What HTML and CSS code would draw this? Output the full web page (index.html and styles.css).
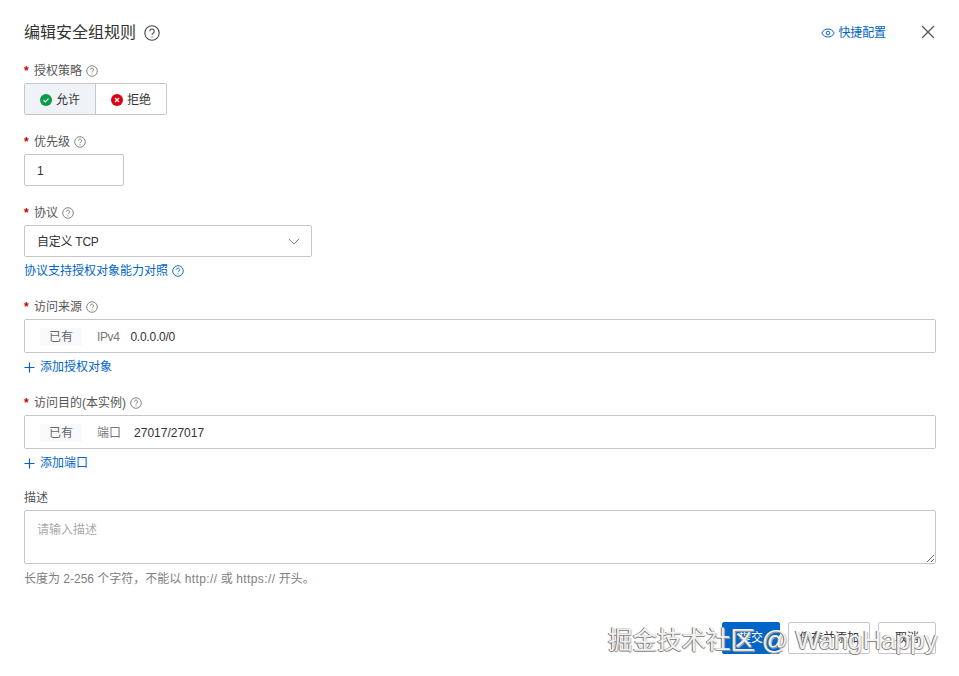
FILE: index.html
```html
<!DOCTYPE html>
<html lang="zh-CN">
<head>
<meta charset="utf-8">
<title>编辑安全组规则</title>
<link rel="stylesheet" href="styles.css">
</head>
<body>
<div class="dialog">
  <header class="head">
    <div class="title"><span>编辑安全组规则</span>
      <svg class="help-lg" viewBox="0 0 16 16"><circle cx="8" cy="8" r="7.2"/><path d="M5.8 6.2a2.2 2.2 0 1 1 3.4 1.9c-.8.5-1.2.9-1.2 1.8"/><path d="M8 11.4v1.2"/></svg>
    </div>
    <div class="head-right">
      <a class="link quick"><svg class="eye" viewBox="0 0 14 14"><path d="M.8 7C2.200 4.400 4.400 3 7 3s4.800 1.400 6.200 4C11.800 9.600 9.600 11 7 11S2.200 9.600.8 7z"/><circle cx="7" cy="7" r="1.800"/></svg>快捷配置</a>
      <svg class="close" viewBox="0 0 14 14"><path d="M1 1l12 12M13 1L1 13"/></svg>
    </div>
  </header>

  <div class="field f-policy">
    <label class="label"><i class="req">*</i>授权策略<svg class="help" viewBox="0 0 12 12"><use href="#q"/></svg></label>
    <div class="seg">
      <div class="seg-item on"><svg class="st" viewBox="0 0 12 12"><circle cx="6" cy="6" r="6" fill="#0a9d48"/><path d="M3.500 6.200l1.800 1.700 3.200-3.300" fill="none" stroke="#fff" stroke-width="1.200"/></svg>允许</div>
      <div class="seg-item"><svg class="st" viewBox="0 0 12 12"><circle cx="6" cy="6" r="6" fill="#de0012"/><path d="M4 4l4 4M8 4l-4 4" fill="none" stroke="#fff" stroke-width="1.200"/></svg>拒绝</div>
    </div>
  </div>

  <div class="field f-prio">
    <label class="label"><i class="req">*</i>优先级<svg class="help" viewBox="0 0 12 12"><use href="#q"/></svg></label>
    <div class="box prio">1</div>
  </div>

  <div class="field f-proto">
    <label class="label"><i class="req">*</i>协议<svg class="help" viewBox="0 0 12 12"><use href="#q"/></svg></label>
    <div class="box select"><span class="tight">自定义 TCP</span><svg class="chev" viewBox="0 0 12 7"><path d="M.8.800L6 6l5.200-5.200"/></svg></div>
    <a class="link compare">协议支持授权对象能力对照<svg class="help blue" viewBox="0 0 12 12"><use href="#q"/></svg></a>
  </div>

  <div class="field f-src">
    <label class="label"><i class="req">*</i>访问来源<svg class="help" viewBox="0 0 12 12"><use href="#q"/></svg></label>
    <div class="box entry"><span class="tag">已有</span><span class="kind k1">IPv4</span><span class="tight">0.0.0.0/0</span></div>
    <a class="link add"><svg class="plus" viewBox="0 0 11 11"><path d="M5.500.500v10M.5 5.500h10"/></svg>添加授权对象</a>
  </div>

  <div class="field f-dst">
    <label class="label"><i class="req">*</i>访问目的(本实例)<svg class="help" viewBox="0 0 12 12"><use href="#q"/></svg></label>
    <div class="box entry"><span class="tag">已有</span><span class="kind k2">端口</span><span>27017/27017</span></div>
    <a class="link add"><svg class="plus" viewBox="0 0 11 11"><path d="M5.500.500v10M.5 5.500h10"/></svg>添加端口</a>
  </div>

  <div class="field f-desc">
    <label class="label">描述</label>
    <textarea class="area" placeholder="请输入描述"></textarea>
    <p class="hint">长度为 2-256 个字符，不能以 <span class="wide-latin">http://</span> 或 <span class="wide-latin">https://</span> 开头。</p>
  </div>

  <footer class="foot">
    <button class="btn primary">提交</button>
    <button class="btn wide">保存并添加</button>
    <button class="btn">取消</button>
  </footer>
</div>
<div class="watermark">掘金技术社区 <span class="wm-latin">@ WangHappy</span></div>
<svg class="defs" width="0" height="0"><defs><g id="q" fill="none" stroke="currentColor" stroke-width=".9"><circle cx="6" cy="6" r="5.300"/><path d="M4.400 4.700a1.600 1.600 0 1 1 2.500 1.300c-.6.400-.9.700-.9 1.300"/><path d="M6 8.300v1"/></g></defs></svg>
</body>
</html>
```

FILE: styles.css
```css
* { box-sizing: border-box; }
html, body { margin: 0; height: 100%; }
body {
  background: #fff;
  color: #333;
  font: 12px/18px "Liberation Sans", "Noto Sans CJK SC", sans-serif;
  overflow: hidden;
  position: relative;
}
.dialog { padding: 22px 23px 0 24px; }
.head { display: flex; justify-content: space-between; align-items: center; height: 22px; }
.title { display: flex; align-items: center; gap: 8px; font-size: 16px; color: #333; }
.help-lg { width: 16px; height: 16px; fill: none; stroke: #444; stroke-width: 1.100; }
.head-right { display: flex; align-items: center; gap: 35px; padding-right: 1px; }
.link { color: #0064c8; display: flex; align-items: center; }
.quick { gap: 3px; letter-spacing: -.1px; }
.eye { width: 14px; height: 14px; fill: none; stroke: #0064c8; stroke-width: 1; }
.close { width: 14px; height: 14px; fill: none; stroke: #555; stroke-width: 1.300; margin-bottom: 2px; }
.field { display: flex; flex-direction: column; align-items: flex-start; }
.label { display: flex; align-items: center; height: 18px; color: #555; }
.req { font-style: normal; color: #c80000; width: 10px; font-weight: 700; }
.help { width: 12px; height: 12px; margin-left: 4px; color: #777; }
.help.blue { color: #0064c8; margin-left: 4px; }
.defs { position: absolute; }
.f-policy { margin-top: 18px; }
.f-prio { margin-top: 18px; }
.f-proto { margin-top: 18px; }
.f-src { margin-top: 18px; }
.f-dst { margin-top: 18px; }
.f-desc { margin-top: 17px; }
.seg { display: flex; margin-top: 3px; height: 32px; border: 1px solid #c4c6cc; border-radius: 2px; }
.seg-item { width: 71px; display: flex; align-items: center; justify-content: center; gap: 4px; color: #333; padding-top: 1px; }
.seg-item:last-child { width: 70px; }
.seg-item.on { background: #eff3f8; border-right: 1px solid #c4c6cc; }
.st { width: 12px; height: 12px; }
.box { border: 1px solid #c4c6cc; border-radius: 2px; display: flex; align-items: center; margin-top: 3px; color: #333; padding-top: 1px; }
.prio { width: 100px; height: 32px; padding-left: 12px; }
.select { width: 288px; height: 32px; padding: 1px 11px 0 12px; justify-content: space-between; }
.tight { letter-spacing: -.25px; }
.chev { width: 12px; height: 7px; fill: none; stroke: #888; stroke-width: 1; }
.compare { margin-top: 5px; }
.entry { width: 100%; height: 34px; padding-left: 15px; }
.tag { background: #f7f9fa; color: #666; padding: 0 9px; height: 18px; display: flex; align-items: center; border-radius: 2px; }
.kind { color: #777; }
.k1 { margin: 0 11px 0 15px; letter-spacing: -.4px; }
.k2 { margin: 0 13px 0 15px; }
.add { margin-top: 5px; gap: 5px; }
.plus { width: 11px; height: 11px; fill: none; stroke: #0064c8; stroke-width: 1.200; }
.area {
  display: block; width: 100%; height: 54px; margin: 3px 0 0;
  border: 1px solid #c4c6cc; border-radius: 2px; padding: 10px 12px;
  font: inherit; color: #333; background: #fff; outline: none;
}
.area::placeholder { color: #aaa; opacity: 1; }
.hint { margin: 6px 0 0; color: #808080; }
.wide-latin { letter-spacing: .4px; }
.foot { display: flex; justify-content: flex-end; gap: 8px; margin-top: 34px; }
.btn {
  height: 32px; width: 58px; padding: 0; background: #fff; color: #333;
  border: 1px solid #c4c6cc; border-radius: 2px; font: inherit;
}
.btn.wide { width: 82px; }
.btn.primary { background: #0064c8; border-color: #0064c8; color: #fff; }
.watermark {
  position: absolute; left: 608px; top: 625px; white-space: nowrap;
  font-size: 24.5px; line-height: 30px; color: #f2f2f2;
  text-shadow: -1px 0 0 #6e6e6e, 0 1px 0 #8c8c8c, 1px 1px 1px #c4c4c4;
}
.wm-latin { font-size: 26px; }
```
